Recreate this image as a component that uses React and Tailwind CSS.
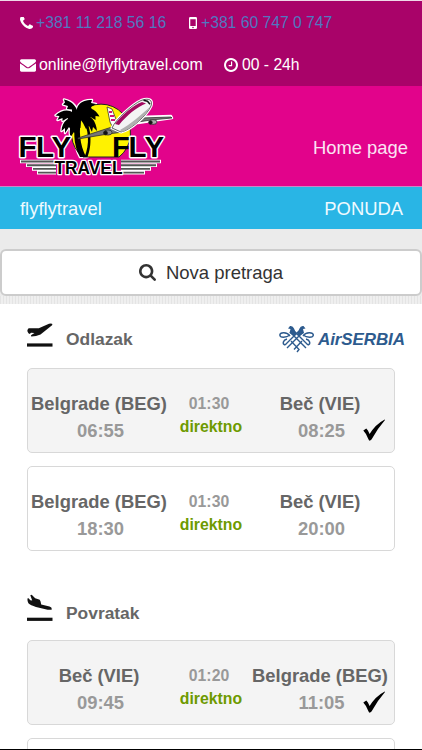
import React from 'react'

const outbound = [
    { from: 'Belgrade (BEG)', depart: '06:55', duration: '01:30', to: 'Beč (VIE)', arrive: '08:25', selected: true },
    { from: 'Belgrade (BEG)', depart: '18:30', duration: '01:30', to: 'Beč (VIE)', arrive: '20:00', selected: false },
]

const inbound = [
    { from: 'Beč (VIE)', depart: '09:45', duration: '01:20', to: 'Belgrade (BEG)', arrive: '11:05', selected: true },
]

const PhoneIcon = () => (
    <svg viewBox="192 256 1408 1280" className="w-[13px] h-[12px] shrink-0" fill="currentColor" preserveAspectRatio="none">
        <path d="M1600 1240q0 27-10 70.5t-21 68.5q-21 50-122 106-94 51-186 51-27 0-53-3.5t-57.5-12.5-47-14.5-55.5-20.5-49-18q-98-35-175-83-127-79-264-216t-216-264q-48-77-83-175-3-9-18-49t-20.5-55.5-14.5-47-12.5-57.5-3.5-53q0-92 51-186 56-101 106-122 25-11 68.5-21t70.5-10q14 0 21 3 18 6 53 76 11 19 30 54t35 63.5 31 53.5q3 4 17.5 25t21.5 35.5 7 28.5q0 20-28.5 50t-62 55-62 53-28.5 46q0 9 5 22.5t8.5 20.5 14 24 11.5 19q76 137 174 235t235 174q2 1 19 11.5t24 14 20.5 8.5 22.5 5q18 0 46-28.5t53-62 55-62 50-28.5q14 0 28.5 7t35.5 21.5 25 17.5q25 15 53.5 31t63.5 35 54 30q70 35 76 53 3 7 3 21z" />
    </svg>
)

const MobileIcon = () => (
    <svg viewBox="0 0 8 12" className="w-[8px] h-[12px] shrink-0" fill="currentColor">
        <path fillRule="evenodd" d="M1.3 0h5.4A1.3 1.3 0 0 1 8 1.3v9.4A1.3 1.3 0 0 1 6.7 12H1.3A1.3 1.3 0 0 1 0 10.7V1.3A1.3 1.3 0 0 1 1.3 0zM1.3 2.3v6.7h5.4V2.3zM3.2 10.5a.8.8 0 1 0 1.6 0 .8.8 0 1 0-1.6 0z" />
    </svg>
)

const EnvelopeIcon = () => (
    <svg viewBox="0 256 1792 1408" className="w-[16px] h-[13px] shrink-0" fill="currentColor">
        <path d="M1792 710v794q0 66-47 113t-113 47h-1472q-66 0-113-47t-47-113v-794q44 49 101 87 362 246 497 345 57 42 92.5 65.5t94.5 48 110 24.5h2q51 0 110-24.5t94.5-48 92.5-65.5q170-123 498-345 57-39 100-87zm0-294q0 79-49 151t-122 123q-376 261-468 325-10 7-42.5 30.5t-54 38-52 32.5-57.5 27-50 9h-2q-23 0-50-9t-57.5-27-52-32.5-54-38-42.5-30.5q-91-64-262-182.5t-205-142.5q-62-42-117-115.5t-55-136.5q0-78 41.5-130t118.5-52h1472q65 0 112.5 47t47.5 113z" />
    </svg>
)

const ClockIcon = () => (
    <svg viewBox="128 128 1536 1536" className="w-[14px] h-[14px] shrink-0" fill="currentColor">
        <path d="M1024 544v448q0 14-9 23t-23 9h-320q-14 0-23-9t-9-23v-64q0-14 9-23t23-9h224v-352q0-14 9-23t23-9h64q14 0 23 9t9 23zm416 352q0-148-73-273t-198-198-273-73-273 73-198 198-73 273 73 273 198 198 273 73 273-73 198-198 73-273zm224 0q0 209-103 385.5t-279.5 279.5-385.5 103-385.5-103-279.5-279.5-103-385.5 103-385.5 279.5-279.5 385.5-103 385.5 103 279.5 279.5 103 385.5z" />
    </svg>
)

const SearchIcon = () => (
    <svg viewBox="64 128 1664 1664" className="w-[17px] h-[17px] shrink-0" fill="currentColor">
        <path d="M1216 832q0-185-131.5-316.5t-316.5-131.5-316.5 131.5-131.5 316.5 131.5 316.5 316.5 131.5 316.5-131.5 131.5-316.5zm512 832q0 52-38 90t-90 38q-54 0-90-38l-343-342q-179 124-399 124-143 0-273.5-55.5t-225-150-150-225-55.5-273.5 55.5-273.5 150-225 225-150 273.5-55.5 273.5 55.5 225 150 150 225 55.5 273.5q0 220-124 399l343 343q37 37 37 90z" />
    </svg>
)

const CheckIcon = () => (
    <svg viewBox="0 0 22 22" className="w-[22px] h-[22px]" fill="#000">
        <path d="M0.3 11.5L3.3 9.6Q4.9 10.8 6.6 15Q12.5 5.2 21.7 0.4L22 1Q14.5 9.5 8.5 20.6L6.8 21.7Q5.9 21.4 5.3 19.9Q3 14.2 0.3 11.5z" />
    </svg>
)

const TakeoffIcon = () => (
    <svg viewBox="0 0 26 26" className="w-[26px] h-[26px] shrink-0" fill="#111">
        <path d="M0.4 7L1.6 5.2 11.8 5.3 22 0.8Q24.5 0 25.4 0.9 25.7 2.2 23.5 3.6L13.5 11.5Q9 13.6 4.5 13.6 3.4 13.2 4.3 12L7.5 9.9 4 9.7 2.8 11Q1.2 10.6 0.5 8.5z" />
        <rect x="0" y="20.4" width="25.500" height="3.200" />
    </svg>
)

const LandingIcon = () => (
    <svg viewBox="0 0 26 27" className="w-[26px] h-[27px] shrink-0" fill="#111">
        <path d="M0.4 4.5L1.6 4.3 3.3 6.2 5.2 6.5 3.3 1.3 4.7 0.7 8.2 4.2 12.7 5.8Q13.7 7 14.200 10.500L22.500 12.600Q24.900 13.300 24.900 15.400 22.500 16.100 18.500 15.200L9 12.900Q3.500 11.500 1.400 9.300 0.300 7.500 0.400 4.500z" />
        <rect x="0" y="23.700" width="25.500" height="3.200" />
    </svg>
)

const Palm = () => (
    <g>
        <path d="M77 116C73 128 73 145 80 157h6C80 145 78 130 82 116z" />
        <path d="M82 119C89 128 90 145 84.5 157h3C92 146 92 127 84 118z" />
        <path d="M79 118C78 107 72 101 64 99.5l1 3-2 2 5 1.5-1 3 5 .5 0 4z" />
        <path d="M79 119C73 109 64 108 55.5 115.5l4 .5-2 4 5-2 0 3 5-3 2 3z" />
        <path d="M80 116C69 116 62 121 61.5 131l3.5-3 0 5 4-6 2 3 3-6z" />
        <path d="M81 116C72 121 68 128 70.5 137l3.5-5 2 3 1.5-8 3 1z" />
        <path d="M77 118C75 107 79 100 92 100l-1 3 5 1-5 3 1 3-5 .5-1 4z" />
        <path d="M77 119C83 106 93 105 99.5 116.5l-4-.5 0 4-5-3-2 4-4-4z" />
        <path d="M77 115C89 113 96 119 97 131l-4-4-1 5-3-6-3 3-3-6z" />
    </g>
)

const Logo = () => (
    <svg viewBox="16 94 160 84" className="w-[160px] h-[84px] shrink-0" role="img" aria-label="Fly Fly Travel">
        <g stroke="#fff" strokeWidth="2.5" strokeLinejoin="round">
            <Palm />
        </g>
        <path d="M83 157A29.5 29.5 0 1 1 119 157z" fill="#fff200" stroke="#222" strokeWidth="1" />
        <Palm />

        {/* Speed lines */}
        <path d="M20 161.5H56M26 165.2H56M32 168.9H56M37 172.6H56M121 161.5H161M121 165.2H157M121 168.9H151M121 172.6H145" stroke="#fff" strokeWidth="3.6" />
        <path d="M21 161.5H56M27 165.2H56M33 168.9H56M38 172.6H56M121 161.5H160M121 165.2H156M121 168.9H150M121 172.6H144" stroke="#555" strokeWidth="1.9" />

        {/* White outline, then black lettering */}
        <g fontFamily="'Liberation Sans', Arial, sans-serif" fontWeight="700" fill="#000" stroke="#fff" strokeLinejoin="round" paintOrder="stroke">
            <text x="18.5 36 51.5" y="156.5" fontSize="29.5" strokeWidth="3">FLY</text>
            <text x="112" y="156.5" fontSize="29.5" strokeWidth="0">F</text>
            <text x="128.5 144.5" y="156.5" fontSize="29.5" strokeWidth="3">LY</text>
            <text x="54.5" y="173.5" fontSize="17.5" strokeWidth="2.5" textLength="68" lengthAdjust="spacingAndGlyphs">TRAVEL</text>
        </g>

        {/* Airplane */}
        <g stroke="#222" strokeWidth="0.7" strokeLinejoin="round">
            <path d="M118 125L78 138 78 139 105 134.5 123 132z" fill="#777" />
            <path d="M140 117L171 116 172 118 151 121 138 123z" fill="#ddd" stroke="#fff" strokeWidth="2.5" />
            <path d="M140 118L171 117 172 118 151 120 138 122z" fill="#777" />
            <path d="M117 122L112 109 107 107 110 122 113 128z" fill="#fff" />
            <path d="M112 128C115 120 133 104 141 100.5 149 97.5 153 100 151 106 147 115 131 130 121 132z" fill="#f4f4f4" stroke="#fff" strokeWidth="3" />
            <path d="M112 128C115 120 133 104 141 100.5 149 97.5 153 100 151 106 147 115 131 130 121 132z" fill="#f4f4f4" />
            <path d="M115 124C120 117 133 105 142 102L146 103.5C137 107 127 115 119 125z" fill="#a3085f" stroke="none" />
            <path d="M120 130C130 125 142 114 150 107 147 114 133 128 122 132z" fill="#b0b0b0" stroke="none" />
            <path d="M143.5 100.3l4 1 2.5 3" fill="none" stroke="#111" strokeWidth="1.5" />
            <path d="M109 112l3 0M110 116l4 0M111 120l4 0" stroke="#d11276" strokeWidth="2" />
            <ellipse cx="108" cy="132.5" rx="4" ry="2.6" fill="#888" />
            <circle cx="105.5" cy="133" r="2" fill="#111" />
            <ellipse cx="153" cy="122" rx="4" ry="2.4" fill="#aaa" />
            <circle cx="150.5" cy="122.5" r="1.8" fill="#111" />
        </g>
    </svg>
)

const AirSerbiaLogo = () => (
    <svg viewBox="278 324 128 30" className="w-[128px] h-[30px]" role="img" aria-label="AirSERBIA">
        <g fill="none" stroke="#2d5b8e" strokeWidth="1.4">
            <path d="M290 332L306 348M303 332L287 348M294 331L308 345M299 331L285 345" />
            <path d="M291 341L299 349.5 297 352M302 341L294 349.5" />
            <path d="M290 336C287 331.5 280 332 279.8 335 280 338 286 338 290 335M303 336C306 331.5 313 332 313.4 335 313 338 307 338 303 335" />
            <path d="M285 345C282 344 283 340 287 339M308 345C311 344 310 340 306 339" />
        </g>
        <path d="M288 328.5L290 326Q293 325.5 294 328.5L296.5 334 294 336 289.5 333 290.5 329z" fill="#2d5b8e" />
        <path d="M305.5 328.5L303.5 326Q300.5 325.5 299.5 328.5L297 334 299.5 336 304 333 303 329z" fill="#2d5b8e" />
        <text x="318" y="345" fontFamily="'Liberation Sans', Arial, sans-serif" fontWeight="700" fontStyle="italic" fontSize="17" fill="#2d5b8e" textLength="87" lengthAdjust="spacing">AirSERBIA</text>
    </svg>
)

const TopBar = () => (
    <div className="h-[86px] shrink-0 bg-[#a90369] border-t border-[#efd9e8] text-white text-[15.7px] leading-[42px] whitespace-nowrap">
        <div className="h-[42px] pl-5 pt-px flex items-center">
            <PhoneIcon />
            <a href="#phone" className="ml-[3px] w-[153px] text-[#5178c0]">+381 11 218 56 16</a>
            <MobileIcon />
            <a href="#mobile" className="ml-[4px] text-[#5178c0]">+381 60 747 0 747</a>
        </div>
        <div className="h-[43px] pl-5 pt-px flex items-center">
            <EnvelopeIcon />
            <span className="ml-[3px] w-[185px] text-[15.9px]">online@flyflytravel.com</span>
            <ClockIcon />
            <span className="ml-[4px]">00 - 24h</span>
        </div>
    </div>
)

const Header = () => (
    <header className="shrink-0">
        <div className="h-[101px] bg-[#e2038b] border-b border-[#c987c4] pl-4 pr-[14px] flex justify-between items-start">
            <div className="pt-2">
                <Logo />
            </div>
            <a href="#home" className="mt-[48px] text-[18.4px] leading-[28px] text-[#fbe3f3]">Home page</a>
        </div>
        <nav className="h-[42px] bg-[#29b5e5] pl-5 pr-[19px] pt-px flex justify-between items-center text-[18.4px] text-[#eefaff]">
            <span>flyflytravel</span>
            <span>PONUDA</span>
        </nav>
    </header>
)

const FlightCard = ({ flight }) => (
    <div className={`relative h-[85px] rounded-[5px] border border-[#d8d8d8] pt-[21px] grid grid-cols-[142px_78px_142px] text-center font-bold ${flight.selected ? 'bg-[#f4f4f4]' : 'bg-white'}`}>
        <div className="whitespace-nowrap text-[18.4px] leading-[27px]">
            <p className="text-[#666]">{flight.from}</p>
            <p className="text-[#999] pl-[3px]">{flight.depart}</p>
        </div>
        <div className="text-[15.8px] leading-[23px] pt-[2px]">
            <p className="text-[#999]">{flight.duration}</p>
            <p className="text-[#6e9a00] pl-[4px]">direktno</p>
        </div>
        <div className="whitespace-nowrap text-[18.4px] leading-[27px] pl-[2px]">
            <p className="text-[#666]">{flight.to}</p>
            <p className="text-[#999] pl-[3px]">{flight.arrive}</p>
        </div>
        {flight.selected && (
            <span className="absolute right-[9px] bottom-[11px]">
                <CheckIcon />
            </span>
        )}
    </div>
)

const App = () => {
    return (
        <div className="w-full h-[750px] overflow-hidden flex flex-col bg-white border-b border-black font-['Liberation_Sans',Arial,sans-serif]">
            <TopBar />
            <Header />

            {/* New search */}
            <div className="h-[75px] shrink-0 bg-[#ebebeb] pt-5">
                <button className="w-full h-[47px] bg-white border-2 border-[#ccc] rounded-[6px] flex items-center justify-center gap-[10px] text-[18.5px] text-[#333]">
                    <SearchIcon />
                    Nova pretraga
                </button>
                <div className="h-2 bg-[repeating-linear-gradient(90deg,#e4e4e4_0_1px,#efefef_1px_3px)]"></div>
            </div>

            <main className="px-[27px]">
                <div className="h-[64px] flex items-start">
                    <div className="mt-[19px]">
                        <TakeoffIcon />
                    </div>
                    <h2 className="ml-[13px] mt-[24px] text-[17.4px] leading-[22px] font-bold text-[#666]">Odlazak</h2>
                    <div className="ml-auto -mr-[11px] mt-5">
                        <AirSerbiaLogo />
                    </div>
                </div>
                <div className="flex flex-col gap-[13px]">
                    {outbound.map((flight) => (
                        <FlightCard key={flight.depart} flight={flight} />
                    ))}
                </div>

                <div className="h-[89px] flex items-start">
                    <div className="mt-[43px]">
                        <LandingIcon />
                    </div>
                    <h2 className="ml-[13px] mt-[51px] text-[17.4px] leading-[22px] font-bold text-[#666]">Povratak</h2>
                </div>
                <div className="flex flex-col gap-[13px]">
                    {inbound.map((flight) => (
                        <FlightCard key={flight.depart} flight={flight} />
                    ))}
                    {/* Next result, just entering the view */}
                    <div className="h-[85px] rounded-[5px] border border-[#d8d8d8] bg-white"></div>
                </div>
            </main>
        </div>
    )
}

export default App
